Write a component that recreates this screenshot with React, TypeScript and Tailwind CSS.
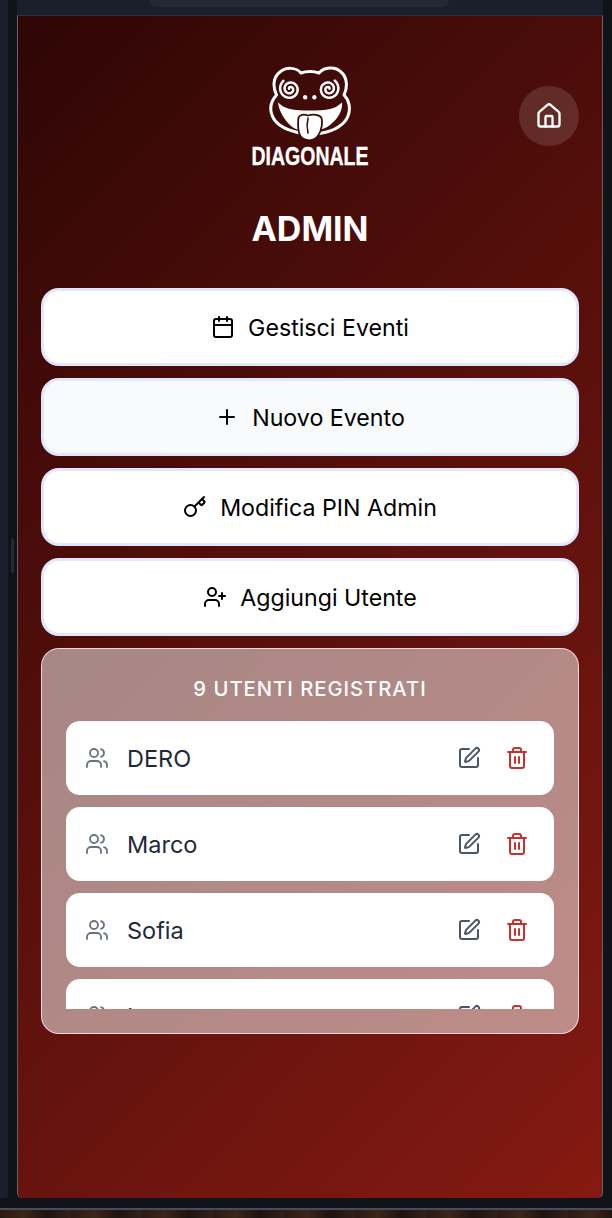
import { Calendar, Plus, Key, UserPlus, Users, SquarePen, Trash2, House } from "lucide-react";

function spiral(cx: number, cy: number, r: number, dir: number, start: number) {
  const pts: string[] = [];
  const turns = 2.1;
  for (let i = 0; i <= 60; i++) {
    const t = i / 60;
    const a = start + dir * t * turns * Math.PI * 2;
    const rad = r * (0.1 + 0.9 * t);
    pts.push(`${(cx + rad * Math.cos(a)).toFixed(2)} ${(cy + rad * Math.sin(a)).toFixed(2)}`);
  }
  return "M" + pts.join("L");
}

function Frog() {
  return (
    <svg viewBox="38 16 84 76" className="w-[84px] h-[76px]">
      <path
        d="M46.500 45C42.500 37 43 27 50 22C56 17 66 17 71 23C76 21 84 21 89 23C94 17 105 16 111 22C117 27 118 37 114 45C119 50 121 58 118 66C115 74 105 81 92 83C84 85 74 85 66 82C54 79 45 74 42 65C39 57 42 50 46.500 45Z"
        fill="none"
        stroke="white"
        strokeWidth="3"
        strokeLinejoin="round"
      />
      <path d={spiral(60, 39, 10.5, 1, 3.4)} fill="none" stroke="white" strokeWidth="2.500" strokeLinecap="round" />
      <path d={spiral(98.500, 39, 10.5, -1, -0.3)} fill="none" stroke="white" strokeWidth="2.500" strokeLinecap="round" />
      <path d="M73 47.500C73 45 75 44 77 46C78 47.500 77 49.500 75 49.500C74 49.500 73 48.500 73 47.500Z" fill="white" />
      <path d="M86.500 47.500C86.500 45 84.500 44 82.500 46C81.500 47.500 82.500 49.500 84.500 49.500C85.500 49.500 86.500 48.500 86.500 47.500Z" fill="white" />
      <path
        d="M48 52.500C52 56 55 58 60 59C70 61 90 61 100 59C105 58 108 56 112 52.500C113 60 108 69 100 75C94 80 86 81 78 81C70 81 64 79 60 75C54 69 49 61 48 52.500Z"
        fill="white"
      />
      <path
        d="M68.500 67.500C69.500 64.500 74 64 78 65.500C83 64 90 64.500 91.500 68C92.500 72 92 80 88.500 85C85.500 89.500 81 91 76.500 90C72 89 69 85 68.500 80C68 76 68 71 68.500 67.500Z"
        fill="white"
        stroke="#400908"
        strokeWidth="1.800"
      />
      <path d="M78 68C76.800 73 76.800 78 78 83" fill="none" stroke="#400908" strokeWidth="1.600" strokeLinecap="round" />
    </svg>
  );
}

const actions = [
  { label: "Gestisci Eventi", Icon: Calendar, bg: "bg-white" },
  { label: "Nuovo Evento", Icon: Plus, bg: "bg-[#f8fafc]" },
  { label: "Modifica PIN Admin", Icon: Key, bg: "bg-white" },
  { label: "Aggiungi Utente", Icon: UserPlus, bg: "bg-white" },
];

const users = ["DERO", "Marco", "Sofia", "Luca"];

export default function App() {
  return (
    <div className="relative w-[612px] h-[1218px] overflow-hidden flex flex-col bg-[#10131a] font-['Inter',sans-serif]">
      <div className="flex h-[1208px]">
        <div className="w-[8px] h-[1198px] bg-[#1a1f2b] rounded-br-[3px]" />
        <div className="relative w-[9px]">
          <div className="absolute left-[3px] top-[538px] w-[3px] h-[35px] rounded-full bg-[#262a33]" />
        </div>
        <div className="w-[586px] flex flex-col">
          <div className="h-[15px] bg-[#1a1f2b] pl-[132px]">
            <div className="w-[300px] h-[7px] rounded-b-[8px] bg-[#232833]" />
          </div>
          <div className="h-[1183px] rounded-b-[5px] border-x border-t border-x-[#6e5f60] border-t-[#2c2f38] bg-linear-[135deg] from-[#2e0605] to-[#851a12] px-[23px] flex flex-col">
            <div className="relative flex flex-col items-center pt-[50px]">
              <Frog />
              <div className="h-[22px] mt-[3px] flex items-center justify-center font-['Liberation_Sans',sans-serif] font-bold text-[26px] leading-none text-white scale-x-[0.75] [-webkit-text-stroke:0.35px_white]">
                DIAGONALE
              </div>
              <button className="absolute right-0 top-[70px] w-[60px] h-[60px] rounded-full bg-[#ffffff20] flex items-center justify-center text-white">
                <House size={28} strokeWidth={2} />
              </button>
            </div>
            <h1 className="mt-[42px] text-center text-[34px] leading-[40px] font-bold text-white">ADMIN</h1>
            <div className="mt-[39px] flex flex-col gap-[12px]">
              {actions.map(({ label, Icon, bg }) => (
                <button
                  key={label}
                  className={`h-[78px] rounded-[18px] border-[3px] border-[#e0e7ff] ${bg} flex items-center justify-center gap-[13px] text-[23.2px] font-[420] text-black`}
                >
                  <Icon size={24} strokeWidth={2} />
                  <span className="mt-[2px]">{label}</span>
                </button>
              ))}
            </div>
            <section className="mt-[12px] h-[386px] rounded-[18px] border border-[#ffffffb0] bg-[#ffffff80] px-[24px] pt-[24px]">
              <h2 className="text-center text-[20.2px] leading-[32px] font-medium tracking-[0.05em] text-white">9 UTENTI REGISTRATI</h2>
              <div className="mt-[16px] h-[288px] overflow-hidden flex flex-col gap-[12px]">
                {users.map((name) => (
                  <div key={name} className="h-[74px] shrink-0 rounded-[14px] bg-white flex items-center pl-[19px] pr-[25px]">
                    <Users size={24} strokeWidth={1.8} className="text-gray-500" />
                    <span className="ml-[18px] mt-[2px] flex-1 text-[23.5px] font-normal text-gray-800">{name}</span>
                    <SquarePen size={24} strokeWidth={2} className="text-gray-600" />
                    <Trash2 size={24} strokeWidth={2} className="ml-[24px] text-[#c9302c]" />
                  </div>
                ))}
              </div>
            </section>
          </div>
        </div>
        <div className="w-[9px]" />
      </div>
      <div className="h-[2px] bg-[#4a4d55]" />
      <div className="h-[8px] bg-[repeating-linear-gradient(90deg,#2a1a14_0px,#3d2519_23px,#1d130f_47px,#33201a_71px)]" />
    </div>
  );
}
